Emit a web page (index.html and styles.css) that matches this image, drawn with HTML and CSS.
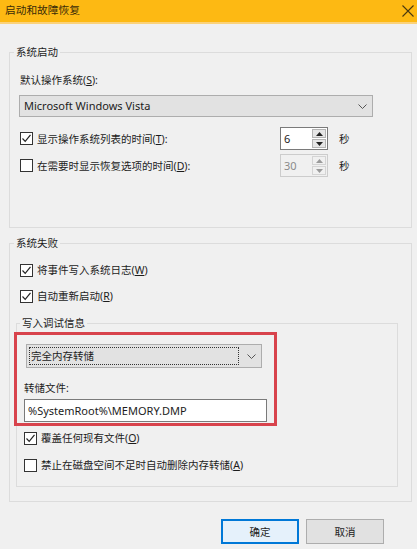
FILE: index.html
```html
<!DOCTYPE html>
<html lang="zh-CN">
<head>
    <meta charset="UTF-8">
    <meta name="viewport" content="width=device-width, initial-scale=1.0">
    <title>启动和故障恢复</title>
    <link rel="stylesheet" href="styles.css">
</head>
<body>
    <div class="titlebar">
        <span class="title">启动和故障恢复</span>
        <svg class="close" width="14" height="14" viewBox="0 0 14 14">
            <path d="M1.5 1.5 L12.5 12.5 M12.5 1.5 L1.5 12.5" stroke="#4a3a10" stroke-width="1.1" fill="none"/>
        </svg>
    </div>

    <div class="main">
        <fieldset class="group group-start">
            <legend>系统启动</legend>
            <div class="label-line">默认操作系统(<u>S</u>):</div>
            <div class="combo combo-os">
                <span>Microsoft Windows Vista</span>
                <svg class="chev" width="9" height="5" viewBox="0 0 9 5"><path d="M0.5 0.5 L4.5 4.5 L8.5 0.5" stroke="#555" fill="none"/></svg>
            </div>

            <div class="spin-row">
                <label class="check check-wide"><span class="box on"><svg width="11" height="11" viewBox="0 0 11 11"><path d="M1.5 5.5 L4.2 8.3 L9.5 1.8" stroke="#222" stroke-width="1.2" fill="none"/></svg></span>显示操作系统列表的时间(<u>T</u>):</label>
                <div class="spin">
                    <span class="spin-val">6</span>
                    <span class="spin-btns">
                        <span class="arr"><svg width="7" height="4" viewBox="0 0 7 4"><path d="M0 4 L3.5 0 L7 4Z" fill="#222"/></svg></span>
                        <span class="arr"><svg width="7" height="4" viewBox="0 0 7 4"><path d="M0 0 L3.5 4 L7 0Z" fill="#222"/></svg></span>
                    </span>
                </div>
                <span class="unit">秒</span>
            </div>

            <div class="spin-row row-gap">
                <label class="check check-wide"><span class="box"></span>在需要时显示恢复选项的时间(<u>D</u>):</label>
                <div class="spin disabled">
                    <span class="spin-val">30</span>
                    <span class="spin-btns">
                        <span class="arr"><svg width="7" height="4" viewBox="0 0 7 4"><path d="M0 4 L3.5 0 L7 4Z" fill="#9a9a9a"/></svg></span>
                        <span class="arr"><svg width="7" height="4" viewBox="0 0 7 4"><path d="M0 0 L3.5 4 L7 0Z" fill="#9a9a9a"/></svg></span>
                    </span>
                </div>
                <span class="unit">秒</span>
            </div>
        </fieldset>

        <fieldset class="group group-fail">
            <legend>系统失败</legend>
            <label class="check first"><span class="box on"><svg width="11" height="11" viewBox="0 0 11 11"><path d="M1.5 5.5 L4.2 8.3 L9.5 1.8" stroke="#222" stroke-width="1.2" fill="none"/></svg></span>将事件写入系统日志(<u>W</u>)</label>
            <label class="check second"><span class="box on"><svg width="11" height="11" viewBox="0 0 11 11"><path d="M1.5 5.5 L4.2 8.3 L9.5 1.8" stroke="#222" stroke-width="1.2" fill="none"/></svg></span>自动重新启动(<u>R</u>)</label>

            <fieldset class="group group-debug">
                <legend>写入调试信息</legend>
                <div class="combo combo-dump">
                    <span class="focus">完全内存转储</span>
                    <svg class="chev" width="9" height="5" viewBox="0 0 9 5"><path d="M0.5 0.5 L4.5 4.5 L8.5 0.5" stroke="#555" fill="none"/></svg>
                </div>
                <div class="label-line dump-label">转储文件:</div>
                <div class="textbox">%SystemRoot%\MEMORY.DMP</div>
                <label class="check over"><span class="box on"><svg width="11" height="11" viewBox="0 0 11 11"><path d="M1.5 5.5 L4.2 8.3 L9.5 1.8" stroke="#222" stroke-width="1.2" fill="none"/></svg></span>覆盖任何现有文件(<u>O</u>)</label>
                <label class="check nodel"><span class="box"></span>禁止在磁盘空间不足时自动删除内存转储(<u>A</u>)</label>
            </fieldset>
        </fieldset>

        <div class="buttons">
            <button class="btn btn-ok">确定</button>
            <button class="btn">取消</button>
        </div>
    </div>

    <div class="highlight"></div>
</body>
</html>
```

FILE: styles.css
```css
*{
    margin: 0;
    padding: 0;
    box-sizing: border-box;
}
body{
    width: 417px;
    height: 549px;
    overflow: hidden;
    position: relative;
    background-color: #f0f0f0;
    font-family: "Noto Sans", "Noto Sans CJK SC", sans-serif;
    font-size: 10.5px;
    line-height: 16px;
    color: #1c1c1c;
}
u{
    text-decoration: underline;
    text-underline-offset: 1px;
}
.titlebar{
    height: 24px;
    display: flex;
    align-items: center;
    justify-content: space-between;
    padding: 0 2px 2px 5px;
    background-color: #fdb913;
    border-bottom: 2px solid #fbd27a;
}
.title{
    font-size: 10.7px;
    color: #3a2c08;
}
.close{
    margin-top: 1px;
}
.main{
    padding: 20px 5px 0 9px;
}
.group{
    border: 1px solid #dcdcdc;
    min-inline-size: 0;
}
.group legend{
    margin-left: 4px;
    padding: 0 2px;
    line-height: 16px;
}
.group-start{
    padding: 0 0 50px 0;
}
.group-fail{
    margin-top: 7px;
    padding: 0 0 14px 0;
}
.group-debug{
    margin: 11px 13px 0 6px;
    padding: 0 0 13px 0;
}
.group-debug legend{
    margin-left: 3px;
}
.label-line{
    margin: 12px 0 0 10px;
}
.combo{
    display: flex;
    align-items: center;
    justify-content: space-between;
    background-color: #e2e2e2;
    border: 1px solid #adadad;
}
.combo-os{
    margin: 7px 0 0 9px;
    width: 354px;
    height: 22px;
    padding: 0 5px 0 4px;
    font-size: 11px;
}
.combo-dump{
    margin: 13px 0 0 9px;
    width: 236px;
    height: 24px;
    padding: 2px 5px 2px 2px;
}
.focus{
    flex: 1;
    height: 18px;
    line-height: 17px;
    padding-left: 1px;
    margin-right: 8px;
    border: 1px dotted #333;
}
.spin-row{
    display: flex;
    align-items: center;
    margin: 10px 0 0 10px;
}
.row-gap{
    margin-top: 4px;
}
.check{
    display: flex;
    align-items: center;
    height: 16px;
}
.check-wide{
    width: 260px;
}
.box{
    width: 13px;
    height: 13px;
    margin-right: 4px;
    border: 1px solid #333;
    background-color: #fff;
    display: flex;
    align-items: center;
    justify-content: center;
    flex-shrink: 0;
}
.first{
    margin: 11px 0 0 10px;
}
.second{
    margin: 10px 0 0 10px;
}
.over{
    margin: 8px 0 0 7px;
}
.nodel{
    margin: 11px 0 0 7px;
}
.spin{
    width: 48px;
    height: 23px;
    display: flex;
    border: 1px solid #7a7a7a;
    background-color: #fff;
}
.spin-val{
    flex: 1;
    padding-left: 3px;
    line-height: 21px;
    font-size: 11px;
}
.spin-btns{
    width: 15px;
    display: flex;
    flex-direction: column;
    gap: 1px;
    padding: 1px 1px 1px 0;
}
.arr{
    flex: 1;
    display: flex;
    align-items: center;
    justify-content: center;
    background-color: #e6e6e6;
    border: 1px solid #b4b4b4;
}
.spin.disabled{
    border-color: #cccccc;
    background-color: #f0f0f0;
    color: #8a8a8a;
}
.spin.disabled .arr{
    background-color: #f0f0f0;
    border-color: #d4d4d4;
}
.unit{
    margin-left: 11px;
}
.dump-label{
    margin: 12px 0 0 7px;
}
.textbox{
    margin: 3px 0 0 7px;
    width: 243px;
    height: 23px;
    padding-left: 3px;
    line-height: 21px;
    font-size: 11px;
    background-color: #fff;
    border: 1px solid #7a7a7a;
}
.buttons{
    display: flex;
    justify-content: flex-end;
    gap: 7px;
    margin: 17px 28px 0 0;
}
.btn{
    width: 78px;
    height: 25px;
    font: inherit;
    color: #1c1c1c;
    background-color: #e1e1e1;
    border: 1px solid #adadad;
}
.btn-ok{
    background-color: #e5f1fb;
    border: 2px solid #0078d7;
}
.highlight{
    position: absolute;
    left: 14px;
    top: 332px;
    width: 263px;
    height: 94px;
    border: 3px solid #d8434c;
}
```
